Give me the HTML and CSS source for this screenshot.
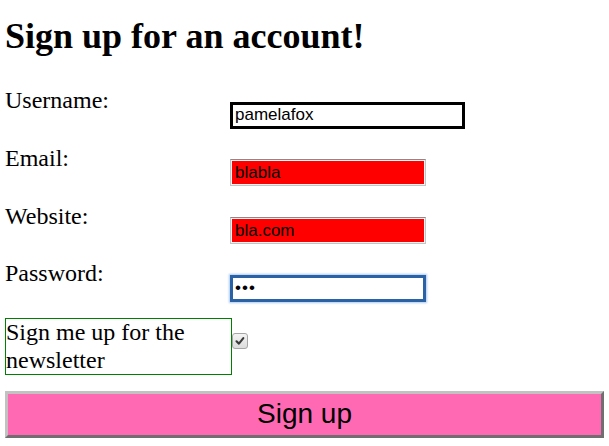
FILE: index.html
```html
<!DOCTYPE html>
<html lang="en">
<head>
<meta charset="utf-8">
<title>Sign up</title>
<link rel="stylesheet" href="styles.css">
</head>
<body>
<div class="page">
  <h1 class="title">Sign up for an account!</h1>
  <form class="signup">
    <div class="row">
      <label class="lbl" for="username">Username:</label>
      <input id="username" class="field field-user" type="text" value="pamelafox">
    </div>
    <div class="row">
      <label class="lbl" for="email">Email:</label>
      <input id="email" class="field field-bad" type="text" value="blabla">
    </div>
    <div class="row">
      <label class="lbl" for="website">Website:</label>
      <input id="website" class="field field-bad" type="text" value="bla.com">
    </div>
    <div class="row">
      <label class="lbl" for="password">Password:</label>
      <input id="password" class="field field-focus" type="password" value="abc">
    </div>
    <div class="row">
      <label class="lbl lbl-boxed" for="newsletter">Sign me up for the newsletter</label>
      <span class="check" id="newsletter" role="checkbox" aria-checked="true">
        <svg class="check-mark" viewBox="0 0 16 16" width="16" height="16" aria-hidden="true">
          <path d="M4 8.3 L6.8 11 L11.8 4.6" fill="none" stroke="#3a3a3a" stroke-width="2.4" stroke-linecap="round" stroke-linejoin="round"/>
        </svg>
      </span>
    </div>
    <button class="submit" type="button">Sign up</button>
  </form>
</div>
</body>
</html>
```
FILE: styles.css
```css
html, body {
  margin: 0;
  padding: 0;
  background: #ffffff;
  color: #000000;
}

.page {
  padding: 0 5px;
  font-family: "Liberation Serif", "Times New Roman", serif;
}

.title {
  font-family: "Liberation Serif", "Times New Roman", serif;
  font-weight: bold;
  font-size: 36px;
  margin: 14.5px 0 30.5px 0;
}

.signup {
  margin: 0;
}

.row {
  display: flex;
  align-items: flex-start;
  min-height: 57.75px;
}

.lbl {
  display: block;
  flex: 0 0 auto;
  width: 225px;
  font-size: 24px;
  line-height: 27.5px;
}

.lbl-boxed {
  border: 1px solid #008000;
}

.field {
  box-sizing: border-box;
  margin: 14.5px 0 0 0;
  font-family: "Liberation Sans", Arial, sans-serif;
  font-size: 17px;
  color: #000000;
  outline: none;
  width: 196px;
  height: 27px;
  padding: 1px 3px;
  border-radius: 0;
}

.field-user {
  width: 235px;
  height: 27.5px;
  border: 3px solid #000000;
  padding: 1px 2px;
  background: #ffffff;
}

.field-bad {
  background: #ff0000;
  border: 1px solid #c4c4c4;
  border-top-color: #8a8a8a;
  box-shadow: inset 0 0 0 1px #f4f4f4;
  padding: 1px 4px;
}

.field-focus {
  background: #ffffff;
  border: 3px solid #2b62a6;
  box-shadow: 0 0 2px 1px #a9c9f0;
  padding: 1px 2px;
  letter-spacing: 1px;
}

.check {
  box-sizing: border-box;
  display: flex;
  align-items: center;
  justify-content: center;
  width: 16px;
  height: 16px;
  margin-top: 14.5px;
  border: 1px solid #a6a6a6;
  border-radius: 3px;
  background: linear-gradient(#f4f4f4, #dcdcdc);
}

.check-mark {
  display: block;
  width: 14px;
  height: 14px;
}

.submit {
  display: block;
  box-sizing: border-box;
  width: 100%;
  height: 47px;
  margin: 15px 0 0 0;
  padding: 0;
  background: #ff69b4;
  border-style: solid;
  border-width: 3px;
  border-color: #c2c2c2 #6f6f6f #6f6f6f #c2c2c2;
  font-family: "Liberation Sans", Arial, sans-serif;
  font-size: 28px;
  color: #000000;
  text-align: center;
  line-height: 1;
}
```
